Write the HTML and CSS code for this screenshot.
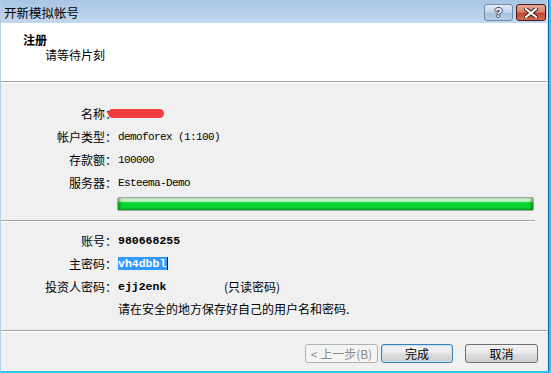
FILE: index.html
```html
<!DOCTYPE html>
<html lang="zh">
<head>
<meta charset="utf-8">
<title>开新模拟帐号</title>
<link rel="stylesheet" href="styles.css">
</head>
<body>
<div class="window">
  <div class="client">
    <div class="titlebar">
      <span class="title">开新模拟帐号</span>
      <div class="caption-btns">
        <div class="cap-btn help">?</div>
        <div class="cap-btn close">
          <svg width="14" height="10" viewBox="0 0 14 10"><path d="M2 1 L12 9 M12 1 L2 9" stroke="#3a1010" stroke-width="4" stroke-linecap="square"/><path d="M2 1 L12 9 M12 1 L2 9" stroke="#ffffff" stroke-width="2.2" stroke-linecap="square"/></svg>
        </div>
      </div>
    </div>
    <div class="header">
      <div class="h-title">注册</div>
      <div class="h-sub">请等待片刻</div>
    </div>
    <div class="body">
      <div class="grid">
        <div class="lbl">名称：</div><div class="val"><span class="redact"></span></div>
        <div class="lbl">帐户类型：</div><div class="val mono">demoforex (1:100)</div>
        <div class="lbl">存款额：</div><div class="val mono">100000</div>
        <div class="lbl">服务器：</div><div class="val mono">Esteema-Demo</div>
      </div>
      <div class="progress"><div class="fill"></div></div>
      <div class="sep"></div>
      <div class="grid g2">
        <div class="lbl">账号：</div><div class="val mono bold">980668255</div>
        <div class="lbl">主密码：</div><div class="val mono bold"><span class="sel">vh4dbbl</span><span class="caret"></span></div>
        <div class="lbl">投资人密码：</div><div class="val"><span class="mono bold pw">ejj2enk</span><span class="cn">(只读密码)</span></div>
        <div class="lbl"></div><div class="val cn note">请在安全的地方保存好自己的用户名和密码.</div>
      </div>
    </div>
    <div class="footer">
      <div class="btn disabled">&lt; 上一步(B)</div>
      <div class="btn default">完成</div>
      <div class="btn cancel">取消</div>
    </div>
  </div>
</div>
</body>
</html>
```

FILE: styles.css
```css
html, body {
  margin: 0;
  padding: 0;
  background: #f0f0f0;
}
body {
  font-family: "Noto Sans CJK SC", "Liberation Sans", sans-serif;
  font-size: 12px;
  color: #000;
}
.window {
  width: 551px;
  height: 373px;
  box-sizing: border-box;
  border-left: 1px solid #b4cfec;
  border-right: 2px solid #2cc6ef;
  border-bottom: 2px solid #2cc6ef;
  display: flex;
}
.client {
  flex: 1;
  display: flex;
  flex-direction: column;
  border-right: 1px solid #1d5fa3;
  box-shadow: inset -1px 0 0 #dfeaf6;
  background: #f0f0f0;
}
.titlebar {
  height: 23px;
  background: linear-gradient(#a9c5e4, #c3d8ee);
  display: flex;
  align-items: center;
  justify-content: space-between;
  margin-right: 1px;
}
.title {
  font-size: 12.5px;
  padding-left: 3px;
  line-height: 23px;
  margin-top: 1px;
}
.caption-btns {
  display: flex;
  gap: 3px;
  align-self: flex-start;
  margin-top: 4px;
  margin-right: 1px;
}
.cap-btn {
  width: 27px;
  height: 15px;
  border-radius: 3px;
  display: flex;
  align-items: center;
  justify-content: center;
}
.help {
  border: 1px solid #6f88a6;
  background: linear-gradient(#e3ecf6 0%, #c6d7ea 45%, #a9c1dc 55%, #b9cee6 100%);
  color: #ffffff;
  font-family: "Liberation Sans", sans-serif;
  font-weight: bold;
  font-size: 13px;
  text-shadow: 0 0 1px #34496a, 1px 0 0 #34496a, -1px 0 0 #34496a, 0 1px 0 #34496a, 0 -1px 0 #34496a;
}
.close {
  width: 28px;
  border: 1px solid #4a1a1a;
  background: linear-gradient(#e7a897 0%, #d7826e 45%, #c2472d 55%, #d06a4e 100%);
}
.header {
  background: #ffffff;
  border-bottom: 1px solid #a0a0a0;
  box-shadow: 0 1px 0 #ffffff;
  margin-right: 1px;
  box-sizing: border-box;
  height: 59px;
}
.h-title {
  font-weight: bold;
  padding-left: 22px;
  margin-top: 10px;
  line-height: 14px;
}
.h-sub {
  padding-left: 44px;
  line-height: 14px;
  margin-top: 1px;
}
.body {
  flex: 1;
  padding-top: 20px;
}
.grid {
  display: grid;
  grid-template-columns: 116px 1fr;
  grid-auto-rows: 23px;
  column-gap: 1px;
  align-items: center;
}
.lbl {
  text-align: right;
  white-space: nowrap;
}
.val {
  white-space: nowrap;
  display: flex;
  align-items: center;
}
.mono {
  font-family: "Liberation Mono", monospace;
  font-size: 11px;
  letter-spacing: -0.6px;
}
.bold {
  font-weight: bold;
  font-size: 11.5px;
  letter-spacing: 0;
}
.redact {
  display: block;
  width: 56px;
  height: 9px;
  border-radius: 5px;
  background: #f13d3d;
  margin-left: -10px;
}
.progress {
  margin: 3px 14px 0 116px;
  height: 14px;
  border: 1px solid #a3a3a3;
  border-radius: 2px;
  box-sizing: border-box;
  background: #e6e6e6;
}
.fill {
  height: 100%;
  background: linear-gradient(#dcf8dc 0%, #b2eeb2 30%, #0ed636 38%, #06cf2f 80%, #03b426 100%);
  box-shadow: inset 3px 0 3px -1px rgba(0,80,0,0.45), inset -3px 0 3px -1px rgba(0,80,0,0.45);
}
.sep {
  margin: 9px 13px 0 0;
  height: 1px;
  background: #a0a0a0;
  box-shadow: 0 1px 0 #ffffff;
}
.g2 {
  margin-top: 8px;
}
.sel {
  background: #3399ff;
  color: #ffffff;
  line-height: 13px;
  padding: 0 1px 0 0;
}
.caret {
  display: inline-block;
  width: 1px;
  height: 13px;
  background: #222;
}
.pw {
  width: 106px;
}
.cn {
  font-family: "Noto Sans CJK SC", sans-serif;
  font-size: 12px;
  letter-spacing: 0;
}
.note {
  margin-top: -3px;
}
.footer {
  height: 41px;
  border-top: 1px solid #a0a0a0;
  box-shadow: inset 0 1px 0 #ffffff;
  box-sizing: border-box;
  display: flex;
  justify-content: flex-end;
  align-items: flex-start;
  padding: 13px 9px 0 0;
  margin-right: 1px;
}
.btn {
  width: 73px;
  height: 19px;
  box-sizing: border-box;
  border: 1px solid #707070;
  border-radius: 3px;
  background: linear-gradient(#f2f2f2 0%, #ebebeb 48%, #dddddd 52%, #cfcfcf 100%);
  display: flex;
  align-items: center;
  justify-content: center;
  font-size: 12px;
  line-height: 17px;
}
.disabled {
  border-color: #adb2b5;
  background: #f4f4f4;
  color: #8a8a8a;
  margin-right: 3px;
}
.default {
  width: 72px;
  border-color: #3c7fb1;
  box-shadow: inset 0 0 0 1px #bfe3f7;
  margin-right: 12px;
}
```
